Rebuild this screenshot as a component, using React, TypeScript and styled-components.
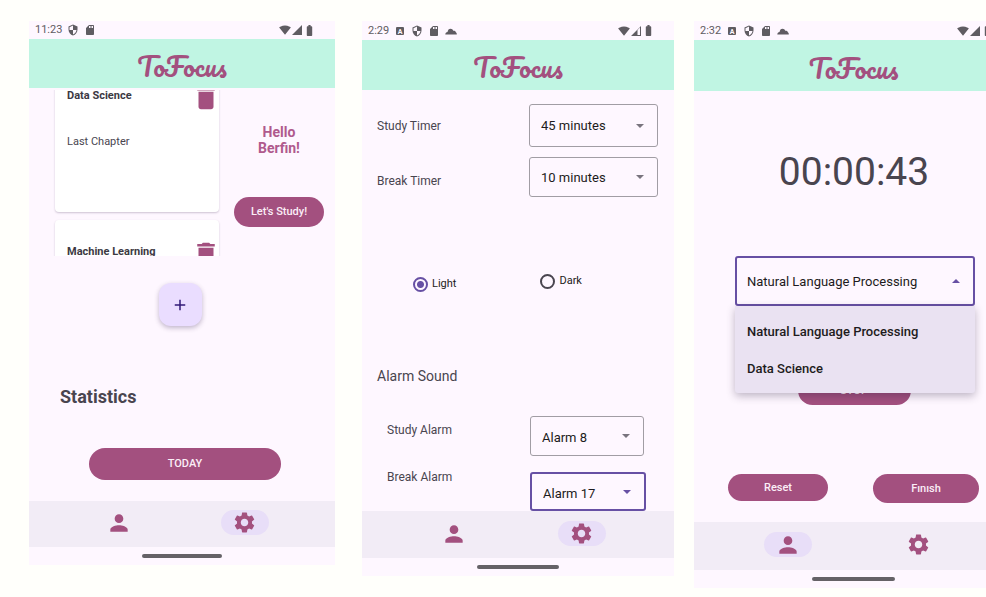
import React, { useState } from "react";
import styled, { createGlobalStyle, css } from "styled-components";
import {
  MdAdd,
  MdBatteryFull,
  MdDelete,
  MdPerson,
  MdSdCard,
  MdSecurity,
  MdSettings,
  MdSignalCellular4Bar,
  MdSignalWifi4Bar,
} from "react-icons/md";

const plum = "#a3507f";
const violet = "#6750a4";
const surface = "#fef7ff";

const GlobalStyle = createGlobalStyle`
  *, *::before, *::after { box-sizing: border-box; }
  body {
    margin: 0;
    overflow: hidden;
    background: #fffffb;
    color: #49454f;
    font-family: Roboto, "Liberation Sans", sans-serif;
  }
  button, select { font-family: inherit; }
  p, h1, h2, h3, ul { margin: 0; padding: 0; }
`;

/* The row runs past the right edge, so the last screen is cut off. */
const Board = styled.main`
  display: flex;
  align-items: flex-start;
  width: calc(100% + 27px);
  padding: 21px 0 9px 29px;
`;

const Phone = styled.section<{ $grow: number; $gap?: number }>`
  flex: ${(p) => p.$grow} 1 0;
  min-width: 0;
  margin-left: ${(p) => p.$gap ?? 0}px;
  background: ${surface};
`;

const StatusBar = styled.div<{ $height: number }>`
  display: flex;
  align-items: center;
  justify-content: space-between;
  height: ${(p) => p.$height}px;
  padding: 0 19px 0 6px;
  color: #5f5c62;
  font-size: 11px;
  line-height: 18px;
`;

const StatusGroup = styled.div<{ $gap: number }>`
  display: flex;
  align-items: center;
  gap: ${(p) => p.$gap}px;

  svg { display: block; }
`;

const Header = styled.header<{ $height: number }>`
  display: flex;
  align-items: center;
  justify-content: center;
  height: ${(p) => p.$height}px;
  padding-top: 4px;
  background: #c0f5e3;
`;

const Brand = styled.h1`
  color: ${plum};
  font-family: Pacifico, Lobster, cursive;
  font-size: 26px;
  font-weight: 400;
  line-height: 32px;
`;

const BottomNav = styled.nav<{ $height: number }>`
  display: grid;
  grid-template-columns: 1fr 1fr;
  align-items: center;
  justify-items: center;
  height: ${(p) => p.$height}px;
  padding: 0 9% 3px;
  background: #f2ecf6;
`;

const NavButton = styled.button<{ $active?: boolean }>`
  display: grid;
  place-items: center;
  width: 48px;
  height: 25px;
  padding: 0;
  border: 0;
  border-radius: 13px;
  background: ${(p) => (p.$active ? "#e8def8" : "transparent")};
  color: ${plum};
`;

const HomeArea = styled.div`
  display: grid;
  place-items: center;
  height: 18px;
`;

const HomeBar = styled.div`
  width: 26%;
  height: 4px;
  border-radius: 2px;
  background: #656267;
`;

const PillButton = styled.button<{ $width: string; $height: number }>`
  display: block;
  width: ${(p) => p.$width};
  height: ${(p) => p.$height}px;
  padding: 0;
  border: 0;
  border-radius: 17px;
  background: ${plum};
  color: #fbeef7;
  font-size: 11px;
  font-weight: 500;
  line-height: 16px;
`;

/* ---- Home screen ---- */

const Overview = styled.div`
  display: flex;
  gap: 4px;
  height: 166px;
  margin-top: 2px;
  padding-left: 26px;
  overflow: hidden;
`;

const CourseList = styled.ul`
  display: flex;
  flex: 164 1 0;
  flex-direction: column;
  gap: 8px;
  height: 304px;
  margin-top: -26px;
  list-style: none;
`;

const CourseCard = styled.li`
  flex: 0 0 148px;
  padding: 19px 0 0 12px;
  border-radius: 4px;
  background: #fff;
  box-shadow: 0 1px 2px rgba(60, 40, 80, 0.25);
`;

const CourseTop = styled.div`
  display: flex;
  align-items: center;
  justify-content: space-between;
  height: 30px;
`;

const CourseTitle = styled.h2`
  padding-bottom: 4px;
  color: #3c3943;
  font-size: 11px;
  font-weight: 700;
  line-height: 12px;
`;

const DeleteButton = styled.button`
  display: grid;
  place-items: center;
  width: 28px;
  height: 30px;
  padding: 0;
  border: 0;
  background: none;
  color: ${plum};
`;

const CourseNote = styled.p`
  margin-top: 21px;
  font-size: 11px;
  line-height: 16px;
`;

const Greeting = styled.div`
  display: flex;
  flex: 112 1 0;
  flex-direction: column;
  align-items: center;
  gap: 41px;
  padding-top: 34px;
`;

const Hello = styled.p`
  width: 56px;
  color: #b05a8d;
  font-size: 14px;
  font-weight: 700;
  line-height: 16px;
  text-align: center;
`;

const AddRow = styled.div`
  display: flex;
  justify-content: center;
  padding: 27px 4px 0 0;
`;

const AddButton = styled.button`
  display: grid;
  place-items: center;
  width: 43px;
  height: 43px;
  padding: 0;
  border: 0;
  border-radius: 12px;
  background: #eaddff;
  box-shadow: 0 2px 5px rgba(50, 30, 80, 0.3);
  color: #321a78;
`;

const StatsTitle = styled.h2`
  margin: 60px 0 40px 31px;
  font-size: 18px;
  font-weight: 700;
  line-height: 22px;
`;

const TodayRow = styled.div`
  display: flex;
  justify-content: center;
  padding: 0 0 21px 6px;
`;

/* ---- Settings screen ---- */

const Timers = styled.div`
  display: flex;
  flex-direction: column;
  gap: 10px;
  padding: 14px 16px 0 15px;
`;

const SettingRow = styled.div`
  display: flex;
  align-items: center;
  justify-content: space-between;
`;

const SettingLabel = styled.label<{ $drop?: number }>`
  padding-top: ${(p) => p.$drop ?? 0}px;
  font-size: 12px;
  line-height: 16px;
`;

const SelectBox = styled.div<{ $width: number; $height: number; $focus?: boolean }>`
  display: grid;
  align-items: center;
  width: ${(p) => p.$width}px;
  height: ${(p) => p.$height}px;
  border: 1px solid #a19da4;
  border-radius: 3px;
  color: #79747e;
  ${(p) =>
    p.$focus &&
    css`
      border: 2px solid ${violet};
      color: ${violet};
    `}

  > * { grid-area: 1 / 1; }
  > svg { justify-self: end; margin-right: 13px; pointer-events: none; }
`;

const Select = styled.select<{ $drop?: number }>`
  width: 100%;
  height: 100%;
  padding: ${(p) => p.$drop ?? 0}px 0 0 11px;
  border: 0;
  outline: 0;
  appearance: none;
  background: transparent;
  color: #1d1b20;
  font-size: 13px;
`;

const ThemeChoices = styled.fieldset`
  display: flex;
  align-items: flex-start;
  gap: 84px;
  margin: 76px 0 0;
  padding: 0 0 0 51px;
  border: 0;
`;

const RadioLabel = styled.label<{ $drop?: number }>`
  display: flex;
  align-items: center;
  gap: 4px;
  padding-top: ${(p) => p.$drop ?? 0}px;
  color: #1d1b20;
  font-size: 11px;
  line-height: 16px;
`;

const Radio = styled.input`
  width: 15px;
  height: 15px;
  margin: 0;
  border: 2px solid #49454f;
  border-radius: 50%;
  appearance: none;

  &:checked {
    border-color: ${violet};
    background: radial-gradient(${violet} 0 3px, transparent 4px);
  }
`;

const SoundTitle = styled.h2`
  margin: 76px 0 0 15px;
  font-size: 14px;
  font-weight: 400;
  line-height: 16px;
`;

const Alarms = styled.div`
  display: flex;
  justify-content: space-between;
  padding: 32px 28px 0 25px;
`;

const AlarmLabels = styled.div`
  display: flex;
  flex-direction: column;
  gap: 31px;
  padding-top: 6px;
`;

const AlarmPicks = styled.div`
  display: flex;
  flex-direction: column;
  gap: 16px;
`;

/* ---- Timer screen ---- */

const TimerBody = styled.div`
  display: flex;
  flex-direction: column;
  align-items: center;
  padding: 57px 15px 19px 16px;
`;

const Elapsed = styled.p`
  font-size: 39px;
  line-height: 48px;
`;

const CoursePicker = styled.div`
  position: relative;
  width: 240px;
  margin: 60px 0 0 2px;
`;

const PickerButton = styled.button`
  display: flex;
  align-items: center;
  justify-content: space-between;
  width: 100%;
  height: 50px;
  padding: 0 13px 0 10px;
  border: 2px solid ${violet};
  border-radius: 3px;
  background: transparent;
  color: ${violet};
  font-size: 13px;
`;

const PickerValue = styled.span`
  color: #1d1b20;
`;

const Menu = styled.ul`
  position: absolute;
  top: 100%;
  left: 0;
  width: 100%;
  padding: 7px 0 6px;
  border-radius: 0 0 3px 3px;
  background: #eae2f2;
  box-shadow: 0 3px 8px rgba(40, 25, 60, 0.3);
  list-style: none;
`;

const MenuItem = styled.li`
  padding: 0 12px;
  color: #1d1b20;
  font-size: 13px;
  font-weight: 500;
  line-height: 37px;
`;

const StopRow = styled.div`
  margin-top: 70px;
`;

const ActionRow = styled.div`
  display: flex;
  align-items: flex-start;
  justify-content: space-between;
  width: 100%;
  margin-top: 69px;
  padding: 0 19px 0 18px;
`;

const LetterBadge = () => (
  <svg width="12" height="12" viewBox="0 0 12 12" aria-hidden="true">
    <rect x="2" y="2" width="8" height="8" rx="1" fill="currentColor" />
    <text x="6" y="8.5" textAnchor="middle" fontSize="7" fontWeight="700" fill={surface}>
      A
    </text>
  </svg>
);

const Cloud = () => (
  <svg width="12" height="12" viewBox="0 0 12 12" aria-hidden="true">
    <path
      d="M.3 9.500C.3 8 1.300 7.100 2.500 7 2.900 4.900 3.900 3.700 5.500 3.700c1.500 0 2.300.8 2.800 2 1.600-.1 2.400.6 2.700 1.700.6.3.9 1.100.8 2.100z"
      fill="currentColor"
    />
  </svg>
);

const WeakSignal = () => (
  <svg width="12" height="12" viewBox="0 0 24 24" aria-hidden="true">
    <path d="M2 22h20V2L2 22zm18-2h-5V10l5-5v15z" fill="currentColor" fillRule="evenodd" />
  </svg>
);

const Caret = ({ up }: { up?: boolean }) => (
  <svg width="8" height="4" viewBox="0 0 8 4" aria-hidden="true">
    <path d={up ? "M0 4 4 0 8 4z" : "M0 0h8L4 4z"} fill="currentColor" />
  </svg>
);

type ChromeProps = {
  time: string;
  extended?: boolean;
  weak?: boolean;
  status: number;
  header: number;
};

const TopChrome = ({ time, extended, weak, status, header }: ChromeProps) => (
  <>
    <StatusBar $height={status}>
      <StatusGroup $gap={5}>
        <span>{time}</span>
        {extended && <LetterBadge />}
        <MdSecurity size={12} />
        <MdSdCard size={12} />
        {extended && <Cloud />}
      </StatusGroup>
      <StatusGroup $gap={0}>
        <MdSignalWifi4Bar size={12} />
        {weak ? <WeakSignal /> : <MdSignalCellular4Bar size={12} />}
        <MdBatteryFull size={13} />
      </StatusGroup>
    </StatusBar>
    <Header $height={header}>
      <Brand>ToFocus</Brand>
    </Header>
  </>
);

const BottomChrome = ({ active, height }: { active: "profile" | "settings"; height: number }) => (
  <>
    <BottomNav $height={height}>
      <NavButton type="button" aria-label="Profile" $active={active === "profile"}>
        <MdPerson size={26} />
      </NavButton>
      <NavButton type="button" aria-label="Settings" $active={active === "settings"}>
        <MdSettings size={25} />
      </NavButton>
    </BottomNav>
    <HomeArea>
      <HomeBar />
    </HomeArea>
  </>
);

const Course = ({ title, note }: { title: string; note?: string }) => (
  <CourseCard>
    <CourseTop>
      <CourseTitle>{title}</CourseTitle>
      <DeleteButton type="button" aria-label={`Delete ${title}`}>
        <MdDelete size={30} />
      </DeleteButton>
    </CourseTop>
    {note && <CourseNote>{note}</CourseNote>}
  </CourseCard>
);

type PickProps = {
  id: string;
  value: string;
  width: number;
  height: number;
  drop?: number;
  focus?: boolean;
};

const Pick = ({ id, value, width, height, drop, focus }: PickProps) => (
  <SelectBox $width={width} $height={height} $focus={focus}>
    <Select id={id} defaultValue={value} $drop={drop}>
      <option>{value}</option>
    </Select>
    <Caret />
  </SelectBox>
);

const courses = ["Natural Language Processing", "Data Science"];

export default function App() {
  const [theme, setTheme] = useState("light");
  const [open, setOpen] = useState(true);
  const [course, setCourse] = useState(courses[0]);

  return (
    <>
      <GlobalStyle />
      <Board>
        <Phone $grow={306}>
          <TopChrome time="11:23" status={18} header={49} />
          <Overview>
            <CourseList>
              <Course title="Data Science" note="Last Chapter" />
              <Course title="Machine Learning" />
            </CourseList>
            <Greeting>
              <Hello>Hello Berfin!</Hello>
              <PillButton type="button" $width="90px" $height={30}>
                Let's Study!
              </PillButton>
            </Greeting>
          </Overview>
          <AddRow>
            <AddButton type="button" aria-label="Add course">
              <MdAdd size={18} />
            </AddButton>
          </AddRow>
          <StatsTitle>Statistics</StatsTitle>
          <TodayRow>
            <PillButton type="button" $width="64%" $height={32}>
              TODAY
            </PillButton>
          </TodayRow>
          <BottomChrome active="settings" height={46} />
        </Phone>

        <Phone $grow={312} $gap={27}>
          <TopChrome time="2:29" extended weak status={19} header={50} />
          <Timers>
            <SettingRow>
              <SettingLabel htmlFor="study-timer">Study Timer</SettingLabel>
              <Pick id="study-timer" value="45 minutes" width={129} height={43} />
            </SettingRow>
            <SettingRow>
              <SettingLabel htmlFor="break-timer" $drop={8}>
                Break Timer
              </SettingLabel>
              <Pick id="break-timer" value="10 minutes" width={129} height={40} />
            </SettingRow>
          </Timers>
          <ThemeChoices>
            <RadioLabel $drop={3}>
              <Radio
                type="radio"
                name="theme"
                checked={theme === "light"}
                onChange={() => setTheme("light")}
              />
              Light
            </RadioLabel>
            <RadioLabel>
              <Radio
                type="radio"
                name="theme"
                checked={theme === "dark"}
                onChange={() => setTheme("dark")}
              />
              Dark
            </RadioLabel>
          </ThemeChoices>
          <SoundTitle>Alarm Sound</SoundTitle>
          <Alarms>
            <AlarmLabels>
              <SettingLabel htmlFor="study-alarm">Study Alarm</SettingLabel>
              <SettingLabel htmlFor="break-alarm">Break Alarm</SettingLabel>
            </AlarmLabels>
            <AlarmPicks>
              <Pick id="study-alarm" value="Alarm 8" width={114} height={40} drop={3} />
              <Pick id="break-alarm" value="Alarm 17" width={116} height={39} drop={3} focus />
            </AlarmPicks>
          </Alarms>
          <BottomChrome active="settings" height={47} />
        </Phone>

        <Phone $grow={319} $gap={20}>
          <TopChrome time="2:32" extended status={19} header={51} />
          <TimerBody>
            <Elapsed>00:00:43</Elapsed>
            <CoursePicker>
              <PickerButton
                type="button"
                aria-haspopup="listbox"
                aria-expanded={open}
                onClick={() => setOpen(!open)}
              >
                <PickerValue>{course}</PickerValue>
                <Caret up={open} />
              </PickerButton>
              {open && (
                <Menu role="listbox" aria-label="Course">
                  {courses.map((name) => (
                    <MenuItem
                      key={name}
                      role="option"
                      aria-selected={name === course}
                      onClick={() => setCourse(name)}
                    >
                      {name}
                    </MenuItem>
                  ))}
                </Menu>
              )}
            </CoursePicker>
            <StopRow>
              <PillButton type="button" $width="113px" $height={29}>
                STOP
              </PillButton>
            </StopRow>
            <ActionRow>
              <PillButton type="button" $width="100px" $height={27}>
                Reset
              </PillButton>
              <PillButton type="button" $width="106px" $height={29}>
                Fınısh
              </PillButton>
            </ActionRow>
          </TimerBody>
          <BottomChrome active="profile" height={48} />
        </Phone>
      </Board>
    </>
  );
}
